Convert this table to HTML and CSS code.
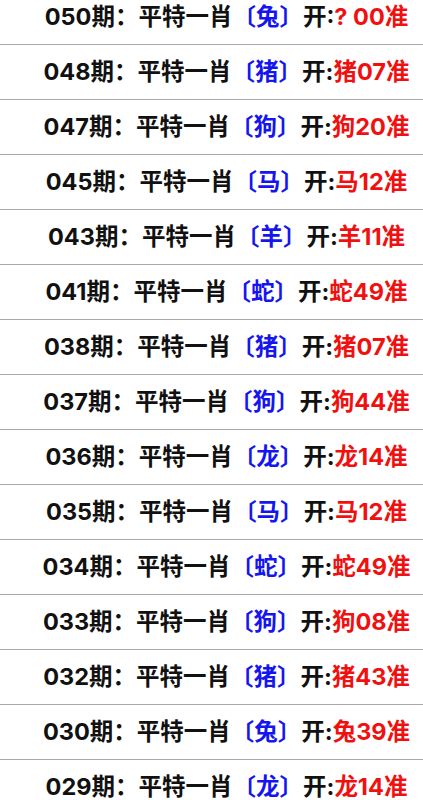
FILE: index.html
```html
<!DOCTYPE html>
<html lang="zh-CN">
<head>
    <meta charset="UTF-8">
    <meta name="viewport" content="width=device-width, initial-scale=1.0">
    <title>平特一肖</title>
    <link rel="stylesheet" href="styles.css">
</head>
<body>
    <div class="list">
        <div class="row">050期：平特一肖<span class="blue">〔兔〕</span>开:<span class="red">? 00准</span></div>
        <div class="row">048期：平特一肖<span class="blue">〔猪〕</span>开:<span class="red">猪07准</span></div>
        <div class="row">047期：平特一肖<span class="blue">〔狗〕</span>开:<span class="red">狗20准</span></div>
        <div class="row">045期：平特一肖<span class="blue">〔马〕</span>开:<span class="red">马12准</span></div>
        <div class="row">043期：平特一肖<span class="blue">〔羊〕</span>开:<span class="red">羊11准</span></div>
        <div class="row">041期：平特一肖<span class="blue">〔蛇〕</span>开:<span class="red">蛇49准</span></div>
        <div class="row">038期：平特一肖<span class="blue">〔猪〕</span>开:<span class="red">猪07准</span></div>
        <div class="row">037期：平特一肖<span class="blue">〔狗〕</span>开:<span class="red">狗44准</span></div>
        <div class="row">036期：平特一肖<span class="blue">〔龙〕</span>开:<span class="red">龙14准</span></div>
        <div class="row">035期：平特一肖<span class="blue">〔马〕</span>开:<span class="red">马12准</span></div>
        <div class="row">034期：平特一肖<span class="blue">〔蛇〕</span>开:<span class="red">蛇49准</span></div>
        <div class="row">033期：平特一肖<span class="blue">〔狗〕</span>开:<span class="red">狗08准</span></div>
        <div class="row">032期：平特一肖<span class="blue">〔猪〕</span>开:<span class="red">猪43准</span></div>
        <div class="row">030期：平特一肖<span class="blue">〔兔〕</span>开:<span class="red">兔39准</span></div>
        <div class="row">029期：平特一肖<span class="blue">〔龙〕</span>开:<span class="red">龙14准</span></div>
    </div>
</body>
</html>
```

FILE: styles.css
```css
body {
    margin: 0;
    background: #fff;
    font-family: Inter, "Noto Sans CJK SC", sans-serif;
    overflow: hidden;
}
.list {
    margin-top: -10px;
}
.row {
    height: 54px;
    line-height: 54px;
    padding-left: 30px;
    border-bottom: 1px solid #a8a8a8;
    text-align: center;
    font-size: 23.5px;
    font-weight: bold;
    color: #111;
    white-space: nowrap;
    text-spacing-trim: space-all;
}
.blue {
    color: #1515f0;
}
.red {
    color: #f01010;
}
```
